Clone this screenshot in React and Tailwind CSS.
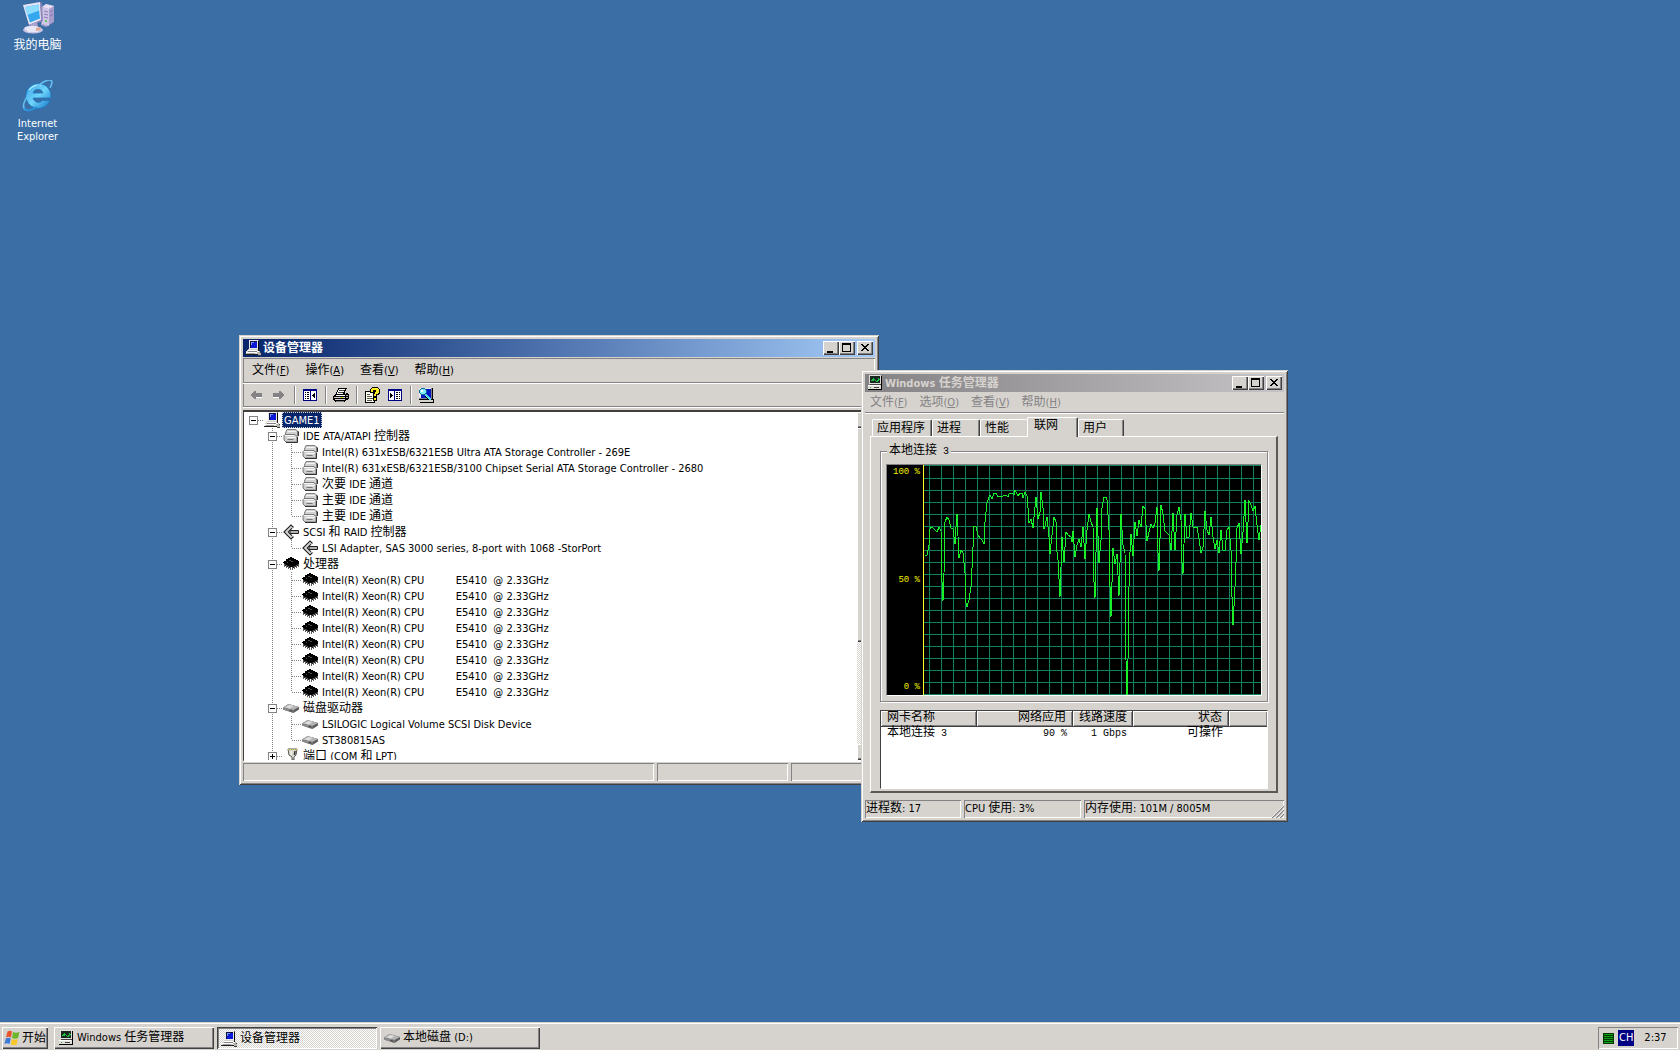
import React from 'react';
import clsx from 'clsx';

const UI_FONT = "font-['DejaVu_Sans_Condensed','Noto_Sans_CJK_SC',sans-serif]";
const MONO_FONT = "font-['Liberation_Mono','Noto_Sans_CJK_SC',monospace]";

const RAISED = 'shadow-[inset_1px_1px_#fff,inset_-1px_-1px_#404040,inset_-2px_-2px_#848284]';
const PRESSED = 'shadow-[inset_1px_1px_#404040,inset_-1px_-1px_#fff,inset_2px_2px_#848284]';
const SUNKEN = 'shadow-[inset_1px_1px_#848284,inset_-1px_-1px_#fff]';
const FRAME = 'shadow-[inset_1px_1px_#d6d3ce,inset_-1px_-1px_#404040,inset_2px_2px_#fff,inset_-2px_-2px_#848284]';
const CHECKER = 'bg-[repeating-conic-gradient(#fff_0_25%,#d6d3ce_0_50%)] bg-[length:2px_2px]';

// Chinese runs are set one size larger than the Latin ones, as in the system font
const Text = ({ children }) =>
  children.split(/([\u4e00-\u9fff]+)/).map((part, i) =>
    /[\u4e00-\u9fff]/.test(part) ? <span key={i} className="text-xs leading-none">{part}</span> : part
  );

/* ---------- icons ---------- */

const Icon = ({ size = 16, className, children }) => (
  <svg width={size} height={size} viewBox="0 0 16 16" shapeRendering="crispEdges" aria-hidden="true" className={clsx('shrink-0', className)}>
    {children}
  </svg>
);

const PcIcon = () => (
  <Icon>
    <path d="M4 0h10v10H4z" fill="#6b6b6b" />
    <path d="M4 0h9v9H4z" fill="#e8e8e8" />
    <path d="M5 1h7v7H5z" fill="#0a18d8" />
    <path d="M5 1h7v1H5zM5 1h1v7H5z" fill="#101040" />
    <path d="M6 2h3v1H6zM6 3h1v2H6z" fill="#7090ff" />
    <path d="M13 1h1v9h-1z" fill="#000" />
    <path d="M3 9h10v1H3zM2 10h11v1H2zM1 11h12v3H1z" fill="#d6d3ce" />
    <path d="M3 10h9v1H3zM1 12h11v1H1z" fill="#fff" />
    <path d="M3 11h9v1H3z" fill="#848284" />
    <path d="M0 14h13v1H0zM13 9h1v3h-1z" fill="#202020" />
    <path d="M2 13h8v1H2z" fill="#9a9a9a" />
    <path d="M12 11h3v1h1v3h-3v-2h-1z" fill="#b5b2ad" />
    <path d="M12 11h2v1h-2z" fill="#fff" />
    <path d="M13 15h3v1h-3zM15 12h1v1h-1z" fill="#404040" />
  </Icon>
);

const TaskMgrIcon = () => (
  <Icon>
    <path d="M3 1h12v8H3z" fill="#000" />
    <path d="M2 0h12v9H2z" fill="#e0ded8" />
    <path d="M3 1h10v7H3z" fill="#182820" />
    <path d="M4 5h1V4h1V3h1v1h1v1h1v1h1V5h1V3h1v1h1v1h-1v1h-1v1H9V6H8V5H7v1H4z" fill="#20c040" />
    <path d="M3 9h11v1H3z" fill="#404040" />
    <path d="M1 10h13v4H1z" fill="#e0ded8" />
    <path d="M1 10h12v1H1z" fill="#fff" />
    <path d="M14 9h1v6h-1zM1 14h14v1H1z" fill="#000" />
    <path d="M7 12h5v1H7z" fill="#404040" />
    <path d="M3 12h1v1H3z" fill="#20a030" />
  </Icon>
);

const ControllerIcon = () => (
  <svg width={16} height={16} viewBox="0 0 16 16" aria-hidden="true" className="shrink-0">
    <path d="M4 1.500h9l1.500 1.500v5H2.500V5z" fill="#d0d0d0" stroke="#808080" />
    <path d="M4.500 3.500h8" stroke="#f4f4f4" />
    <path d="M14.500 3l1 1v4" fill="none" stroke="#303030" />
    <path d="M2 6.500h10l2 2v5.500H3l-2-2V7.500z" fill="#cfcfcf" stroke="#777" />
    <path d="M2.500 7.500h9M4 9.500h9" stroke="#f6f6f6" />
    <path d="M4.500 11.500h6" stroke="#777" />
    <path d="M3 14.500h11.500V9" fill="none" stroke="#303030" />
  </svg>
);

const ScsiIcon = () => (
  <svg width={16} height={16} viewBox="0 0 16 16" aria-hidden="true" className="shrink-0">
    <path d="M10.500 3.500L8 1 1 8l7 7 2.500-2.500" fill="none" stroke="#202020" strokeWidth="1.200" />
    <path d="M9 4L5 8l4 4" fill="none" stroke="#202020" strokeWidth="1.200" />
    <path d="M9.200 3.200L8.200 2.500 2.700 8l5.500 5.500 1-1L4.500 8z" fill="#c4c4c4" />
    <path d="M7 6.500h8.500v3H7z" fill="#b4b4b4" stroke="#202020" />
  </svg>
);

const CpuIcon = () => (
  <Icon>
    <path d="M7 1h2v1h2v1h2v1h2v1h1v3h-2v1h-2v1h-2v1H7v-1H5V9H3V8H1V7H0V6h1V5h2V3h2V2h2z" fill="#000" />
    <path d="M6 4h2v1H6zM8 5h2v1H8zM4 6h1v1H4z" fill="#505050" />
    <path d="M1 8h1v3H1zM3 9h1v3H3zM5 10h1v3H5zM7 11h1v3H7zM9 11h1v3H9zM11 10h1v3h-1zM13 9h1v3h-1zM15 8h1v3h-1z" fill="#606060" />
    <path d="M2 8h1v2H2zM4 9h1v2H4zM6 10h1v2H6zM10 10h1v2h-1zM12 9h1v2h-1zM14 8h1v2h-1z" fill="#202020" />
  </Icon>
);

const DiskIcon = () => (
  <svg width={16} height={16} viewBox="0 0 16 16" aria-hidden="true" className="shrink-0">
    <path d="M0 7.500L5.500 4 16 7v2.500L10.500 13 0 9.500z" fill="#5c5c5c" />
    <path d="M0 7.500L5.500 4 16 7l-5.500 3z" fill="#b4b4b4" />
    <path d="M2.500 7.200L6.500 5l4 1.200-4 2.300z" fill="#dedede" />
    <path d="M0 7.500L10.500 10v3L0 9.500z" fill="#8c8c8c" />
    <path d="M6.500 10l3 .8v1l-3-.9z" fill="#2c2c2c" />
  </svg>
);

const PortIcon = () => (
  <svg width={16} height={16} viewBox="0 0 16 16" aria-hidden="true" className="shrink-0">
    <path d="M5 1h9l-1 6-2 2v3H9V9L6 7z" fill="#d8d8c8" stroke="#555" />
    <path d="M5 1.500h9" stroke="#e0d840" strokeDasharray="1 1" />
    <path d="M8 3v4" stroke="#fff" />
    <path d="M12 3l-.5 4" stroke="#333" strokeWidth="1.500" />
    <path d="M10 12v2H2" fill="none" stroke="#777" />
  </svg>
);

const ArrowIcon = ({ flip }) => (
  <Icon className={flip && '-scale-x-100'}>
    <path d="M6 4h2v2h6v4H8v2H6v-1H5v-1H4V9H3V7h1V6h1V5h1z" fill="#848284" />
    <path d="M8 10h6v1H8z" fill="#fff" />
  </Icon>
);

const PaneIcon = ({ flip }) => (
  <Icon className={flip && '-scale-x-100'}>
    <path d="M1 2h14v12H1z" fill="#000084" />
    <path d="M2 4h6v9H2zM9 4h5v9H9z" fill="#fff" />
    <path d="M3 5h1v1H3zM5 5h2v1H5zM3 7h1v1H3zM5 7h2v1H5zM3 9h1v1H3zM5 9h2v1H5zM3 11h1v1H3zM5 11h2v1H5z" fill="#000" />
    <path d="M12 6h1v5h-1v-1h-1V9h-1V8h1V7h1z" fill="#000" />
  </Icon>
);

const PrintIcon = () => (
  <Icon>
    <path d="M5 1h9v1h-1v2h-1v3H3V5h1V3h1z" fill="#000" />
    <path d="M6 2h6v1h-1v2h-1v2H4V5h1V3h1z" fill="#fff" />
    <path d="M6 3h5v1H6zM5 5h5v1H5z" fill="#404040" />
    <path d="M2 7h11V6h2v1h1v5h-1v1h-2v1h-1v1H2v-1H1v-1H0V9h1V8h1z" fill="#000" />
    <path d="M1 10h11v1H1zM2 12h10v1H2z" fill="#d6d3ce" />
    <path d="M3 8h9v1H3z" fill="#fff" />
    <path d="M13 8h2v1h-2zM13 10h2v1h-2z" fill="#a0a0a0" />
    <path d="M3 14h8v1H3z" fill="#848284" />
    <path d="M8 10h2v1H8z" fill="#d0d000" />
  </Icon>
);

const HelpIcon = () => (
  <Icon>
    <path d="M1 4h10v12H1z" fill="#000" />
    <path d="M2 5h8v10H2z" fill="#fffff0" />
    <path d="M3 7h3v1H3zM3 9h5v1H3zM3 11h6v1H3zM3 13h5v1H3z" fill="#555" />
    <path d="M8 0h6v1h1v1h1v5h-1v1h-2v2H9V6h2V5h-1v1H6V2h1V1h1z" fill="#000" />
    <path d="M8 1h6v1h1v4h-1v1h-2v2h-2V7h1V5h1V3H9v2H7V2h1z" fill="#ffef20" />
    <path d="M9 10h4v4H9z" fill="#000" />
    <path d="M10 11h2v2h-2z" fill="#ffef20" />
  </Icon>
);

const ScanIcon = () => (
  <Icon>
    <path d="M1 1h13v11H1z" fill="#848284" />
    <path d="M1 1h12v10H1z" fill="#e8e8e8" />
    <path d="M3 2h10v9H3z" fill="#0018c8" />
    <path d="M14 1h1v11h-1zM1 12h14v1H1z" fill="#000" />
    <path d="M2 13h13v2H2z" fill="#d6d3ce" />
    <path d="M2 15h14v1H2zM15 12h1v3h-1z" fill="#000" />
    <path d="M3 1h4v1h1v1h1v3H8v1H7v1H3V7H2V6H1V3h1V2h1z" fill="#106898" />
    <path d="M3 2h4v1h1v3H7v1H3V6H2V3h1z" fill="#80f0ff" />
    <path d="M3 3h2v2H3z" fill="#fff" />
    <path d="M7 7h2v1h1v1h1v1h1v1h1v2h-2v-1h-1v-1H9v-1H8V9H7z" fill="#58d8f0" />
    <path d="M7 9h1v1h1v1h1v1h1v1h-1v-1H9v-1H8v-1H7z" fill="#000" />
  </Icon>
);

const MyComputerIcon = () => (
  <svg width={32} height={32} viewBox="0 0 32 32" aria-hidden="true">
    <ellipse cx="11" cy="28" rx="10" ry="3.500" fill="#c9c4e4" />
    <path d="M20 5l4-3 8 2v16l-8 5-5-2z" fill="#a79dcc" />
    <path d="M20 5l4-3 8 2-5 3z" fill="#e6def2" />
    <path d="M20 5l7 2v17l-7-2z" fill="#cfc5e6" />
    <path d="M22 9l4 1M22 12l4 1M22 15l4 1" stroke="#8678b4" />
    <path d="M28 10l3-1.500M28 14l3-1.500" stroke="#8478b4" />
    <path d="M23 18h2v2h-2z" fill="#58c858" />
    <path d="M1 3L18 0l2 18-13 5z" fill="#e8e6f6" />
    <path d="M18 0l2 1 1 18-14 5v-1l12-5z" fill="#8d86b8" />
    <path d="M3 5l13.500-2.500L18 16.500 8 20.500z" fill="#35a7ee" />
    <path d="M3 5l13.500-2.500.7 6L5.200 13z" fill="#8edcff" />
    <path d="M9 22l6-2 1 5H8z" fill="#a9a2cf" />
    <path d="M2 26c3-3 13-3 16 0l-2 4H6z" fill="#e9e6f6" />
    <path d="M14 26l5-1-1 3-4 1z" fill="#e0a890" />
  </svg>
);

const IeIcon = () => (
  <svg width={32} height={32} viewBox="0 0 32 32" aria-hidden="true">
    <defs>
      <linearGradient id="ie" x1="0" y1="0" x2="1" y2="1">
        <stop offset="0" stopColor="#2d9fe6" />
        <stop offset=".5" stopColor="#6fd4fb" />
        <stop offset="1" stopColor="#1173c8" />
      </linearGradient>
    </defs>
    <path d="M16 3.500a12.500 12.500 0 1 0 12 17h-7.500a5.500 5.500 0 0 1-9.500-2.500h17.800A12.500 12.500 0 0 0 16 3.500zm-5 9.500a5.200 5.200 0 0 1 10 0z" fill="url(#ie)" stroke="#1a78c4" strokeWidth=".8" />
    <path d="M7 10a12 12 0 0 1 12-4.500" fill="none" stroke="#a5e6ff" strokeWidth="1.500" />
    <path d="M4 30c-6-3 0-14 8-21S29-3 30 2c0 2-1 4-2 6" fill="none" stroke="#62bdf0" strokeWidth="1.600" />
    <path d="M2.500 28c3 5 9 1 12-1" fill="none" stroke="#2b92dc" strokeWidth="2" />
  </svg>
);

const StartIcon = () => (
  <svg width={16} height={16} viewBox="0 0 16 16" aria-hidden="true" className="shrink-0">
    <path d="M3.500 1.500c2-1 3-1 4.500 0L7 7.500c-2-1-3-1-5 0z" fill="#e8542c" />
    <path d="M9 2c2 1 4 1 6.500 0L14 8c-2 1-4 1-6 0z" fill="#6cb52d" />
    <path d="M1.800 8.500c2-1 3-1 5 0L5.500 14c-2-1-3-1-5 0z" fill="#3c78d8" />
    <path d="M7.800 9c2 1 4 1 6 0l-1 5.500c-2 1-4 1-6 0z" fill="#f8c828" />
  </svg>
);

/* ---------- window chrome ---------- */

const CAPTION_GLYPHS = {
  最小化: <path d="M4 10h6v2H4z" />,
  最大化: <path d="M3 2h9v9H3zM4 4v6h7V4z" fillRule="evenodd" />,
  关闭: <path d="M4 3h2v1h1v1h2V4h1V3h2v1h-1v1h-1v1H9v1h1v1h1v1h1v1h-2V9H9V8H7v1H6v1H4V9h1V8h1V7h1V6H6V5H5V4H4z" />,
};

const CaptionButton = ({ name }) => (
  <button type="button" aria-label={name} className={clsx('h-3.5 w-4 bg-[#d6d3ce]', RAISED, name === '关闭' && 'ml-0.5')}>
    <svg width={16} height={14} viewBox="0 0 16 14" shapeRendering="crispEdges" aria-hidden="true">
      {CAPTION_GLYPHS[name]}
    </svg>
  </button>
);

const TitleBar = ({ icon, title, active }) => (
  <header
    className={clsx(
      'flex h-[18px] items-center px-0.5 text-[11px] font-bold',
      active ? 'bg-linear-to-r from-[#08246b] to-[#a5cbf7] text-white' : 'bg-linear-to-r from-[#848284] to-[#c6c3c6] text-[#d6d3ce]'
    )}
  >
    {icon}
    <h2 className="ml-0.5 flex-1 pt-0.5 leading-4"><Text>{title}</Text></h2>
    <CaptionButton name="最小化" />
    <CaptionButton name="最大化" />
    <CaptionButton name="关闭" />
  </header>
);

const MenuBar = ({ items, className }) => (
  <nav className={clsx('flex items-center pt-0.5', className)}>
    {items.map(([label, key]) => (
      <button key={key} type="button" className="leading-4">
        <Text>{label}</Text>(<u>{key}</u>)
      </button>
    ))}
  </nav>
);

const Etched = () => <div className="h-0.5 border-t border-b border-t-[#848284] border-b-white" />;
const ToolSeparator = () => <div className="-mr-px h-[18px] w-0.5 border-r border-l border-r-white border-l-[#848284]" />;

const ToolButton = ({ name, children }) => (
  <button type="button" aria-label={name}>{children}</button>
);

/* ---------- device manager ---------- */

const CPU = 'Intel(R) Xeon(R) CPU          E5410  @ 2.33GHz';

const DEVICES = [
  {
    label: 'IDE ATA/ATAPI 控制器',
    icon: ControllerIcon,
    children: [
      'Intel(R) 631xESB/6321ESB Ultra ATA Storage Controller - 269E',
      'Intel(R) 631xESB/6321ESB/3100 Chipset Serial ATA Storage Controller - 2680',
      '次要 IDE 通道',
      '主要 IDE 通道',
      '主要 IDE 通道',
    ],
  },
  { label: 'SCSI 和 RAID 控制器', icon: ScsiIcon, children: ['LSI Adapter, SAS 3000 series, 8-port with 1068 -StorPort'] },
  { label: '处理器', icon: CpuIcon, children: Array(8).fill(CPU) },
  { label: '磁盘驱动器', icon: DiskIcon, children: ['LSILOGIC Logical Volume SCSI Disk Device', 'ST380815AS'] },
  { label: '端口 (COM 和 LPT)', icon: PortIcon, children: [] },
];

const CELL_LINES = {
  blank: '',
  root: 'M9.500 8.500H19',
  line: 'M9.500 0V16',
  tee: 'M9.500 0V16M9.500 8.500H19',
  elbow: 'M9.500 0V8M9.500 8.500H19',
};

const TreeCell = ({ type, toggle }) => (
  <svg width={19} height={16} viewBox="0 0 19 16" shapeRendering="crispEdges" aria-hidden="true" className="shrink-0">
    <path d={CELL_LINES[type]} fill="none" stroke="#848284" strokeDasharray="1 1" />
    {toggle && (
      <>
        <rect x="5.500" y="4.500" width="8" height="8" fill="#fff" stroke="#848284" />
        <path d={toggle === 'plus' ? 'M7 8h5v1H7zM9 6h1v5H9z' : 'M7 8h5v1H7z'} />
      </>
    )}
  </svg>
);

const TreeRow = ({ cells, toggle, icon: RowIcon, label, selected }) => (
  <div role="treeitem" aria-selected={!!selected} className="flex h-4 items-center">
    {cells.map((type, i) => (
      <TreeCell key={i} type={type} toggle={i === cells.length - 1 ? toggle : null} />
    ))}
    <span className="ml-px"><RowIcon /></span>
    <span
      className={clsx(
        'ml-0.5 h-4 px-0.5 leading-[18px] whitespace-pre',
        selected && 'bg-[#08246b] text-white outline-1 -outline-offset-1 outline-dotted outline-[#d6d3ce]'
      )}
    >
      <Text>{label}</Text>
    </span>
  </div>
);

const DeviceTree = () => (
  <div role="tree" aria-label="设备管理器" className="h-full min-w-0 flex-1 overflow-hidden">
    <TreeRow cells={['root']} toggle="minus" icon={PcIcon} label="GAME1" selected />
    {DEVICES.map((group) => (
      <React.Fragment key={group.label}>
        <TreeRow cells={['blank', 'tee']} toggle={group.children.length ? 'minus' : 'plus'} icon={group.icon} label={group.label} />
        {group.children.map((child, i) => (
          <TreeRow
            key={i}
            cells={['blank', 'line', i === group.children.length - 1 ? 'elbow' : 'tee']}
            icon={group.icon}
            label={child}
          />
        ))}
      </React.Fragment>
    ))}
  </div>
);

const DeviceManager = () => (
  <section className={clsx('absolute top-[335px] left-[239px] w-[640px] bg-[#d6d3ce] p-1', FRAME)}>
    <TitleBar icon={<PcIcon />} title="设备管理器" active />
    <div className={clsx('mt-px', SUNKEN)}>
      <MenuBar className="h-6 gap-4 px-[9px]" items={[['文件', 'F'], ['操作', 'A'], ['查看', 'V'], ['帮助', 'H']]} />
      <Etched />
      <div className="flex h-[22px] items-center gap-[7px] px-[5px]">
        <ToolButton name="后退"><ArrowIcon /></ToolButton>
        <ToolButton name="前进"><ArrowIcon flip /></ToolButton>
        <ToolSeparator />
        <ToolButton name="显示/隐藏控制台树"><PaneIcon /></ToolButton>
        <ToolSeparator />
        <ToolButton name="打印"><PrintIcon /></ToolButton>
        <ToolSeparator />
        <ToolButton name="帮助"><HelpIcon /></ToolButton>
        <ToolButton name="属性"><PaneIcon flip /></ToolButton>
        <ToolSeparator />
        <ToolButton name="扫描检测硬件改动"><ScanIcon /></ToolButton>
      </div>
      <Etched />
    </div>
    <div className="mt-0.5 flex h-[352px] border-t-2 border-r border-b-2 border-l border-t-[#404040] border-r-white border-b-white border-l-[#404040] bg-white">
      <DeviceTree />
      <div className={clsx('flex w-[17px] flex-col', CHECKER)}>
        <div className={clsx('h-4 bg-[#d6d3ce]', RAISED)} />
        <div className={clsx('h-[214px] bg-[#d6d3ce]', RAISED)} />
        <div className="flex-1" />
        <div className={clsx('h-4 bg-[#d6d3ce]', RAISED)} />
      </div>
    </div>
    <footer className="mt-px flex h-[18px] gap-[3px]">
      <div className={clsx('flex-1', SUNKEN)} />
      <div className={clsx('w-[131px]', SUNKEN)} />
      <div className={clsx('w-[84px]', SUNKEN)} />
    </footer>
  </section>
);

/* ---------- task manager ---------- */

// x,y samples of the network load curve
const LOAD = `38,91 40,90 42,80 43,64 44,62 46,63 48,65 50,67 52,62 54,66 55,117 56,136 57,108 58,57 60,52 62,55 64,63
  66,64 68,79 69,62 70,49 72,93 74,85 76,88 78,108 79,138 80,142 82,135 84,122 85,103 87,61 89,62 91,70 93,73 95,75
  97,79 98,57 100,38 102,32 103,30 105,34 107,28 109,28 111,32 113,31 115,32 117,30 119,30 121,32 122,29 124,28
  126,29 127,30 128,25 131,31 133,28 135,28 136,33 138,27 140,31 141,43 142,58 144,54 146,63 147,52 149,32 151,54
  153,47 154,27 156,43 157,64 158,61 160,52 162,72 163,89 165,70 167,52 169,57 170,87 171,95 173,132 174,102 175,72
  177,97 179,67 181,70 184,72 185,77 186,66 188,92 190,80 192,74 194,82 196,62 198,94 200,65 202,49 204,57 206,62
  207,117 208,133 210,43 212,98 214,75 215,43 217,32 219,32 220,35 222,65 222,95 223,122 224,152 226,83 228,99
  230,89 232,131 233,98 234,49 236,80 238,88 239,195 240,230 241,195 242,122 243,87 244,69 246,91 248,57 250,71
  252,55 254,62 256,41 258,44 260,76 262,67 264,59 266,63 268,58 270,42 271,88 272,106 274,40 276,49 278,66 282,70
  284,85 286,48 288,85 290,50 292,42 294,55 295,98 296,109 298,49 300,73 302,72 304,48 306,62 310,62 312,74 314,88
  316,82 318,46 320,65 322,70 324,52 326,72 328,84 330,75 332,88 334,65 336,85 338,85 340,65 342,62 344,85 345,132
  346,160 348,122 349,98 350,63 352,58 354,89 356,67 358,35 360,78 362,36 364,40 366,46 368,41 370,60 372,75 374,60`;

const NetworkGraph = () => (
  <div className="flex border border-t-[#848284] border-r-white border-b-white border-l-[#848284] bg-black">
    <div className={clsx('flex w-9 flex-col justify-between py-0.5 pr-[3px] text-right text-[9px] leading-[11px] text-[#f0f000]', MONO_FONT)}>
      <span>100 %</span>
      <span>50 %</span>
      <span>0 %</span>
    </div>
    <svg viewBox="36 0 338 230" className="min-w-0 flex-1" shapeRendering="crispEdges" role="img" aria-label="本地连接 3">
      <g stroke="#108458">
        {Array.from({ length: 28 }, (_, i) => <path key={i} d={`M${42.5 + i * 12} 0V230`} />)}
        {Array.from({ length: 20 }, (_, i) => <path key={i} d={`M37 ${(i ? 1.5 : 0.5) + i * 12}H374`} />)}
      </g>
      <path d="M36.500 0V230" stroke="#ffff20" />
      <polyline points={LOAD} fill="none" stroke="#18f028" />
    </svg>
  </div>
);

const TABS = [
  { label: '应用程序', width: 'w-[60px]' },
  { label: '进程', width: 'w-12' },
  { label: '性能', width: 'w-[47px]' },
  { label: '联网', width: 'w-[51px]', selected: true },
  { label: '用户', width: 'w-[46px]' },
];

const HEAD = 'h-4 whitespace-nowrap border-r border-b border-[#404040] bg-[#d6d3ce] px-1.5 py-0 font-normal shadow-[inset_1px_1px_#fff,inset_-1px_-1px_#848284]';

const AdapterTable = () => (
  <div className={clsx('mt-2 h-[79px] border border-t-[#404040] border-r-white border-b-white border-l-[#404040] bg-white text-[10px]', MONO_FONT)}>
    <table className="w-full table-fixed border-separate border-spacing-0 leading-3">
      <colgroup>
        <col className="w-24" />
        <col className="w-24" />
        <col className="w-[60px]" />
        <col className="w-24" />
        <col />
      </colgroup>
      <thead>
        <tr>
          <th className={clsx(HEAD, 'text-left')}><Text>网卡名称</Text></th>
          <th className={clsx(HEAD, 'text-right')}><Text>网络应用</Text></th>
          <th className={clsx(HEAD, 'text-left')}><Text>线路速度</Text></th>
          <th className={clsx(HEAD, 'text-right')}><Text>状态</Text></th>
          <th className={clsx(HEAD, 'border-r-0')} />
        </tr>
      </thead>
      <tbody className="whitespace-nowrap">
        <tr>
          <td className="px-1.5"><Text>本地连接 3</Text></td>
          <td className="px-1.5 text-right">90 %</td>
          <td className="px-1.5 text-right">1 Gbps</td>
          <td className="px-1.5 text-right"><Text>可操作</Text></td>
          <td />
        </tr>
      </tbody>
    </table>
  </div>
);

const TaskManager = () => (
  <section className={clsx('absolute top-[370px] left-[861px] w-[427px] bg-[#d6d3ce] p-1', FRAME)}>
    <TitleBar icon={<TaskMgrIcon />} title="Windows 任务管理器" />
    <MenuBar className="h-5 gap-3 px-[5px] text-[#848284]" items={[['文件', 'F'], ['选项', 'O'], ['查看', 'V'], ['帮助', 'H']]} />
    <Etched />
    <div className="pt-[3px] pr-1.5 pl-[5px]">
      <div role="tablist" className="flex h-[19px] items-end pl-0.5">
        {TABS.map((tab) => (
          <button
            key={tab.label}
            type="button"
            role="tab"
            aria-selected={!!tab.selected}
            className={clsx(
              'rounded-t-xs border-t border-l border-white text-left',
              tab.width,
              tab.selected ? 'relative -mb-px h-5 bg-[#d6d3ce] pb-0.5 pl-1.5' : 'h-[17px] pt-px pl-1',
              tab.label !== '性能' && 'border-r border-r-[#404040] shadow-[inset_-1px_0_#848284]'
            )}
          >
            <Text>{tab.label}</Text>
          </button>
        ))}
      </div>
      <div className="border-t border-r-2 border-b-2 border-l border-t-white border-r-[#5a5855] border-b-[#5a5855] border-l-white pt-[7px] pr-2 pb-0.5 pl-[9px]">
        <fieldset className="border border-[#848284] px-[5px] pt-1.5 pb-[5px] shadow-[1px_1px_#fff,inset_1px_1px_#fff]">
          <legend className={clsx('ml-px h-3.5 bg-[#d6d3ce] px-0.5 text-[10px] leading-4', MONO_FONT)}>
            <Text>本地连接 3</Text>
          </legend>
          <NetworkGraph />
        </fieldset>
        <AdapterTable />
      </div>
    </div>
    <footer className="mt-[7px] flex h-[18px] gap-[3px] leading-[18px]">
      <div className={clsx('w-24 pl-px', SUNKEN)}><Text>进程数: 17</Text></div>
      <div className={clsx('w-[117px] pl-px', SUNKEN)}><Text>CPU 使用: 3%</Text></div>
      <div className={clsx('flex flex-1 items-end justify-between pl-px', SUNKEN)}>
        <span><Text>内存使用: 101M / 8005M</Text></span>
        <svg width={13} height={13} viewBox="0 0 13 13" aria-hidden="true">
          <path d="M1 13L13 1M5 13l8-8M9 13l4-4" stroke="#848284" strokeWidth="1.500" />
          <path d="M0 13L13 0M4 13l9-9M8 13l5-5" stroke="#fff" strokeWidth=".8" />
        </svg>
      </div>
    </footer>
  </section>
);

/* ---------- desktop ---------- */

const DesktopIcon = ({ icon, label }) => (
  <a href="#" className="flex w-[75px] flex-col items-center text-center text-white">
    {icon}
    <span className="mt-[5px] w-14 leading-[13px]"><Text>{label}</Text></span>
  </a>
);

const TASKS = [
  { label: 'Windows 任务管理器', icon: TaskMgrIcon },
  { label: '设备管理器', icon: PcIcon, active: true },
  { label: '本地磁盘 (D:)', icon: DiskIcon },
];

const Taskbar = () => (
  <footer className="flex h-[27px] items-center border-t border-white bg-[#d6d3ce] px-0.5 pt-0.5 shadow-[0_-1px_#d6d3ce]">
    <button type="button" className={clsx('mr-1.5 flex h-[22px] w-[46px] items-center gap-0.5 pl-0.5', RAISED)}>
      <StartIcon />
      <Text>开始</Text>
    </button>
    <div className="flex min-w-0 flex-1 gap-[3px]">
      {TASKS.map(({ label, icon: TaskIcon, active }) => (
        <button
          key={label}
          type="button"
          aria-pressed={!!active}
          className={clsx('flex h-[22px] w-40 items-center gap-[3px] px-1', active ? [PRESSED, CHECKER, 'pt-0.5'] : RAISED)}
        >
          <TaskIcon />
          <span className="truncate leading-4"><Text>{label}</Text></span>
        </button>
      ))}
    </div>
    <div className={clsx('flex h-[22px] w-20 items-center pl-[5px]', SUNKEN)}>
      <Icon size={11}>
        <path d="M0 0h16v16H0z" fill="#003800" />
        <path d="M1 2h14M1 5h14M1 8h14M1 11h14M1 14h14" stroke="#10a018" strokeWidth="1.500" />
      </Icon>
      <span className="ml-1 bg-[#000084] px-px leading-4 text-white">CH</span>
      <time className="ml-2.5">2:37</time>
    </div>
  </footer>
);

const App = () => (
  <div className={clsx('flex min-h-screen flex-col overflow-hidden bg-[#3a6ea5] text-[11px] text-black', UI_FONT)}>
    <main className="relative flex-1">
      <div className="flex flex-col gap-7 pt-0.5">
        <DesktopIcon icon={<MyComputerIcon />} label="我的电脑" />
        <DesktopIcon icon={<IeIcon />} label="Internet Explorer" />
      </div>
      <DeviceManager />
      <TaskManager />
    </main>
    <Taskbar />
  </div>
);

export default App;
